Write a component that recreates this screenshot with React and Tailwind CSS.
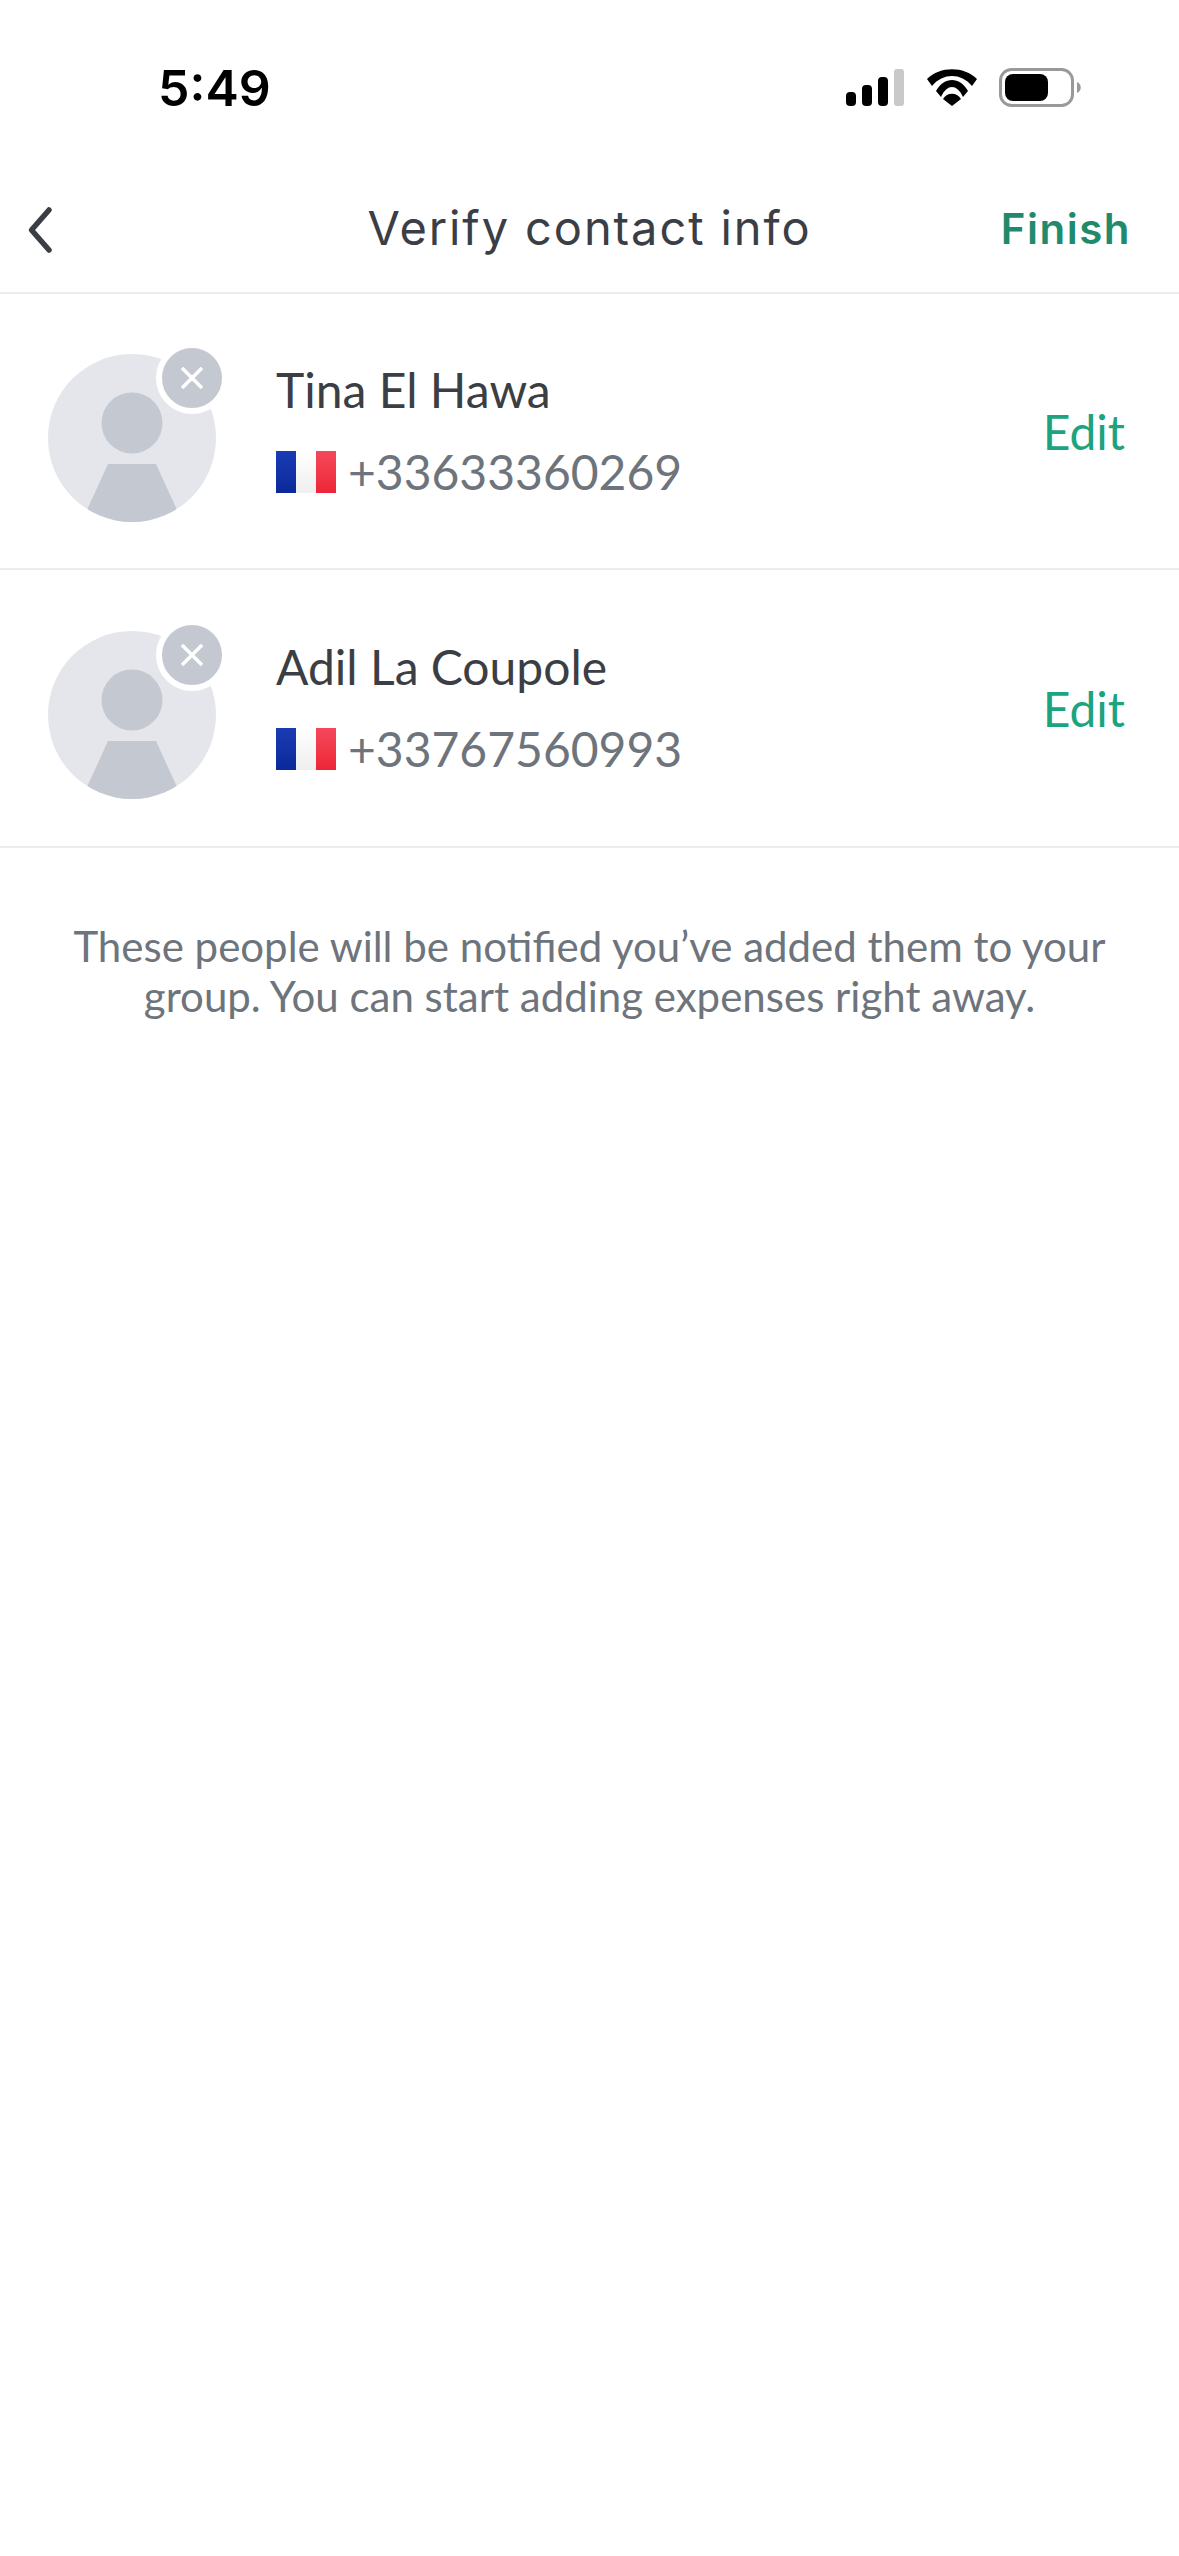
const lato = "font-['Lato','Noto_Sans',sans-serif]";

function StatusBar() {
  return (
    <div className="flex h-[166px] items-start justify-between pl-[158px] pr-[93px] pt-[62px]">
      <span className="font-['Inter',sans-serif] text-[50px] font-semibold leading-[52px] text-black">5:49</span>
      <svg width="240" height="48" viewBox="0 0 240 48" className="mt-[4px]">
        <rect x="0" y="26" width="10" height="14" rx="4" fill="#000" />
        <rect x="16" y="19" width="10" height="21" rx="4" fill="#000" />
        <rect x="32" y="11" width="10" height="29" rx="4" fill="#000" />
        <rect x="48" y="3" width="10" height="37" rx="3" fill="#c9c9c9" />
        <path d="M81 13 C94 0 118 0 131 13 L126 20 C115 6.7 97 6.7 86 20 Z" fill="#000" />
        <path d="M90 25 C98 10.3 114 10.3 122 25 L117 31 C111 17.7 101 17.7 95 31 Z" fill="#000" />
        <path d="M97 33 C101 26 111 26 115 33 L106 40 Z" fill="#000" />
        <rect x="154.5" y="3.5" width="72" height="36" rx="11" fill="none" stroke="#999" strokeWidth="3" />
        <rect x="159" y="8" width="43" height="27" rx="8" fill="#000" />
        <path d="M231 16 C236 18 236 25 231 27 Z" fill="#999" />
      </svg>
    </div>
  );
}

function Header() {
  return (
    <div className="grid h-[128px] grid-cols-[1fr_auto_1fr] items-center border-b-2 border-[#ececee] pl-[26px] pr-[48px]">
      <svg width="30" height="50" viewBox="0 0 30 50" fill="none" className="mt-[2px]">
        <path d="M23 5 L5.5 25 L23 45" stroke="#3b3e44" strokeWidth="5.5" strokeLinecap="round" strokeLinejoin="round" />
      </svg>
      <span className="mb-[3px] ml-[22px] font-['Inter',sans-serif] text-[47px] leading-none tracking-[1.9px] text-[#3b3e44]">Verify contact info</span>
      <span className="justify-self-end font-['Inter',sans-serif] text-[42px] font-semibold leading-none tracking-[1.5px] text-[#1f8a6d]">Finish</span>
    </div>
  );
}

function Avatar() {
  return (
    <div className="relative mt-[14px] h-[168px] w-[168px] shrink-0">
      <svg width="168" height="168" viewBox="0 0 168 168">
        <defs>
          <clipPath id="avatar-clip"><circle cx="84" cy="84" r="84" /></clipPath>
        </defs>
        <circle cx="84" cy="84" r="84" fill="#e5e6eb" />
        <circle cx="84" cy="69" r="30.5" fill="#c4c8d0" />
        <path d="M60 110 H108 L140 180 H28 Z" fill="#c4c8d0" clipPath="url(#avatar-clip)" />
      </svg>
      <div className="absolute right-[-12px] top-[-12px] flex h-[72px] w-[72px] items-center justify-center rounded-full border-[6px] border-white bg-[#c4c8d0]">
        <svg width="24" height="24" viewBox="0 0 24 24" fill="none">
          <path d="M2 2 L22 22 M22 2 L2 22" stroke="#fff" strokeWidth="3.5" />
        </svg>
      </div>
    </div>
  );
}

function Flag() {
  return (
    <div className="flex h-[42px] w-[60px] shrink-0">
      <div className="w-[20px] bg-gradient-to-b from-[#1a3bb3] to-[#0a2a9a]" />
      <div className="w-[20px] bg-gradient-to-b from-white to-[#efefef]" />
      <div className="w-[20px] bg-gradient-to-b from-[#f4485a] to-[#ee2438]" />
    </div>
  );
}

function ContactRow({ name, phone, heightClass }) {
  return (
    <div className={`flex items-center border-b-2 border-[#ececee] pl-[48px] pr-[54px] ${heightClass}`}>
      <Avatar />
      <div className={`ml-[60px] flex flex-1 flex-col ${lato}`}>
        <span className="text-[48px] leading-[60px] text-[#3b3e44]">{name}</span>
        <div className="mt-[22px] flex items-center gap-[12px]">
          <Flag />
          <span className="text-[48px] leading-[60px] text-[#6e747c]">{phone}</span>
        </div>
      </div>
      <span className={`mt-[2px] text-[48px] leading-none text-[#1ba47f] ${lato}`}>Edit</span>
    </div>
  );
}

export default function App() {
  return (
    <div className="min-h-[2556px] w-[1179px] bg-white">
      <StatusBar />
      <Header />
      <ContactRow name="Tina El Hawa" phone="+33633360269" heightClass="h-[276px]" />
      <ContactRow name="Adil La Coupole" phone="+33767560993" heightClass="h-[278px]" />
      <p className={`px-[60px] pt-[73px] text-center text-[42px] leading-[50px] text-[#6e747c] ${lato}`}>
        These people will be notified you’ve added them to your<br />
        group. You can start adding expenses right away.
      </p>
    </div>
  );
}
